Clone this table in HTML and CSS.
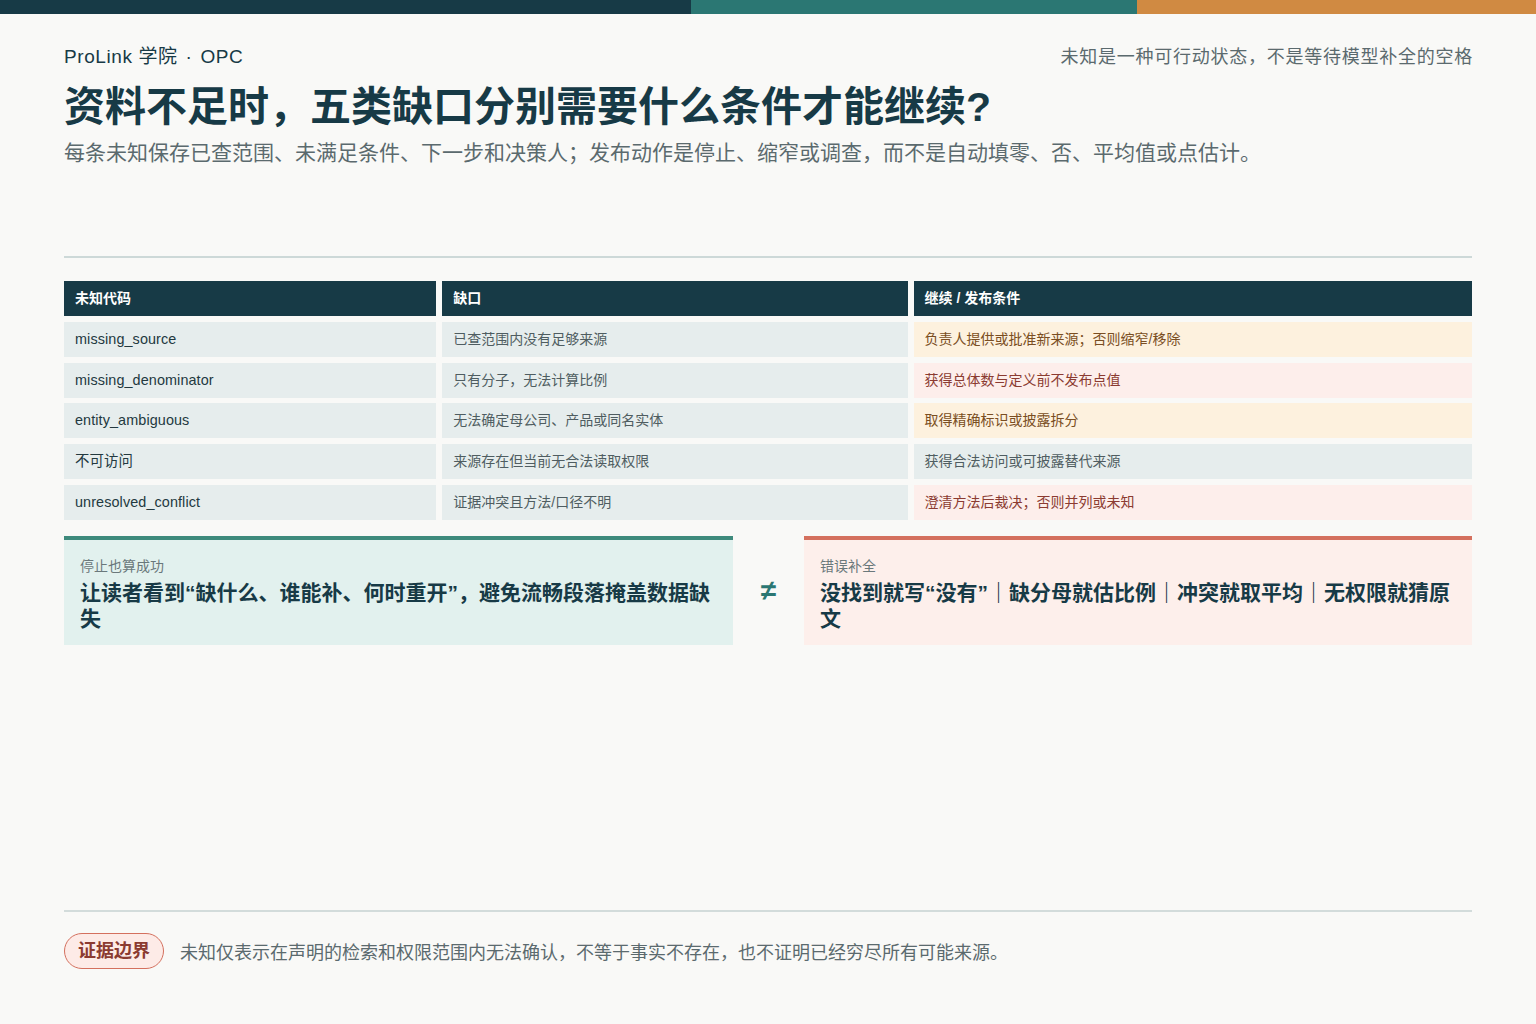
FILE: index.html
```html
<!DOCTYPE html>
<html lang="zh-CN">
<head>
<meta charset="utf-8">
<title>资料不足时，五类缺口分别需要什么条件才能继续?</title>
<link rel="stylesheet" href="styles.css">
</head>
<body>
<div class="topbar"><span class="seg seg-dark"></span><span class="seg seg-teal"></span><span class="seg seg-orange"></span></div>
<div class="page">
  <header class="header">
    <div class="meta">
      <span class="brand">ProLink 学院 <span class="dot">·</span> OPC</span>
      <span class="tagline">未知是一种可行动状态，不是等待模型补全的空格</span>
    </div>
    <h1 class="title">资料不足时，五类缺口分别需要什么条件才能继续?</h1>
    <p class="subtitle">每条未知保存已查范围、未满足条件、下一步和决策人；发布动作是停止、缩窄或调查，而不是自动填零、否、平均值或点估计。</p>
  </header>

  <main class="main">
    <div class="table">
      <div class="th">未知代码</div>
      <div class="th">缺口</div>
      <div class="th">继续 / 发布条件</div>

      <div class="td code">missing_source</div>
      <div class="td">已查范围内没有足够来源</div>
      <div class="td warn">负责人提供或批准新来源；否则缩窄/移除</div>

      <div class="td code">missing_denominator</div>
      <div class="td">只有分子，无法计算比例</div>
      <div class="td risk">获得总体数与定义前不发布点值</div>

      <div class="td code">entity_ambiguous</div>
      <div class="td">无法确定母公司、产品或同名实体</div>
      <div class="td warn">取得精确标识或披露拆分</div>

      <div class="td code">不可访问</div>
      <div class="td">来源存在但当前无合法读取权限</div>
      <div class="td">获得合法访问或可披露替代来源</div>

      <div class="td code">unresolved_conflict</div>
      <div class="td">证据冲突且方法/口径不明</div>
      <div class="td risk">澄清方法后裁决；否则并列或未知</div>
    </div>

    <div class="compare">
      <div class="card card-good">
        <div class="card-label">停止也算成功</div>
        <div class="card-text">让读者看到“缺什么、谁能补、何时重开”，避免流畅段落掩盖数据缺失</div>
      </div>
      <div class="neq">≠</div>
      <div class="card card-bad">
        <div class="card-label">错误补全</div>
        <div class="card-text">没找到就写“没有”｜缺分母就估比例｜冲突就取平均｜无权限就猜原文</div>
      </div>
    </div>
  </main>

  <footer class="footer">
    <span class="pill">证据边界</span>
    <span class="note">未知仅表示在声明的检索和权限范围内无法确认，不等于事实不存在，也不证明已经穷尽所有可能来源。</span>
  </footer>
</div>
</body>
</html>
```

FILE: styles.css
```css
* { box-sizing: border-box; }

html, body {
  margin: 0;
  padding: 0;
}

body {
  background: #f9f9f7;
  font-family: "Liberation Sans", "Noto Sans CJK SC", sans-serif;
  color: #173a46;
  width: 1536px;
  height: 1024px;
  overflow: hidden;
}

.topbar {
  display: flex;
  height: 14px;
}
.seg { display: block; height: 100%; }
.seg-dark { width: 691px; background: #173a46; }
.seg-teal { width: 446px; background: #2b7773; }
.seg-orange { flex: 1; background: #d08a42; }

.page {
  display: flex;
  flex-direction: column;
  height: 1010px;
  padding: 0 64px;
}

.header {
  padding-top: 31px;
}

.meta {
  display: flex;
  justify-content: space-between;
  align-items: baseline;
  height: 24px;
  line-height: 24px;
}
.brand {
  font-size: 19px;
  color: #173a46;
  letter-spacing: 0.6px;
}
.brand .dot {
  margin: 0 2px;
}
.tagline {
  font-size: 18px;
  color: #5b6a6e;
  letter-spacing: 0.75px;
  margin-right: -1px;
}

.title {
  margin: 14px 0 0;
  font-size: 41px;
  line-height: 48px;
  font-weight: 700;
  color: #173a46;
}

.subtitle {
  margin: 8px 0 0;
  font-size: 21px;
  line-height: 28px;
  color: #5b6a6e;
}

.main {
  margin-top: 89px;
  border-top: 2px solid #cdd9d8;
  padding-top: 23px;
}

.table {
  display: grid;
  grid-template-columns: 4fr 5fr 6fr;
  column-gap: 6px;
  row-gap: 5.75px;
}

.th, .td {
  height: 35px;
  line-height: 35px;
  padding: 0 11px;
  font-size: 14px;
  white-space: nowrap;
}

.th {
  background: #173a46;
  color: #ffffff;
  font-weight: 700;
}

.td {
  background: #e6eded;
  color: #4f5d61;
}

.td.code {
  color: #23393f;
  font-size: 14.4px;
  letter-spacing: 0.1px;
}

.td.warn {
  background: #fdf1de;
  color: #7a4e22;
}

.td.risk {
  background: #fdeeeb;
  color: #8b3b31;
}

.compare {
  display: grid;
  grid-template-columns: 669px 1fr 668px;
  margin-top: 16px;
}

.card {
  padding: 16px 16px 13px;
}
.card-good {
  background: #e2f1ee;
  border-top: 4px solid #3e8a7c;
}
.card-bad {
  background: #fdefeb;
  border-top: 4px solid #d4705e;
}

.card-label {
  font-size: 14px;
  line-height: 20px;
  color: #6a787b;
}

.card-text {
  margin-top: 4px;
  font-size: 21px;
  line-height: 26px;
  font-weight: 700;
  color: #173a46;
}

.neq {
  display: flex;
  align-items: center;
  justify-content: center;
  padding-top: 2px;
  font-size: 28px;
  font-weight: 700;
  color: #2b7773;
}

.footer {
  margin-top: auto;
  border-top: 2px solid #d3dcdb;
  padding: 21px 0 55px;
  display: flex;
  align-items: center;
  gap: 16px;
}

.pill {
  display: inline-block;
  height: 36px;
  line-height: 34px;
  padding: 0 13px;
  border: 1px solid #d4705e;
  border-radius: 18px;
  background: #fdebe7;
  color: #8b3b31;
  font-size: 18px;
  font-weight: 700;
}

.note {
  font-size: 18px;
  color: #5b6a6e;
}
```
